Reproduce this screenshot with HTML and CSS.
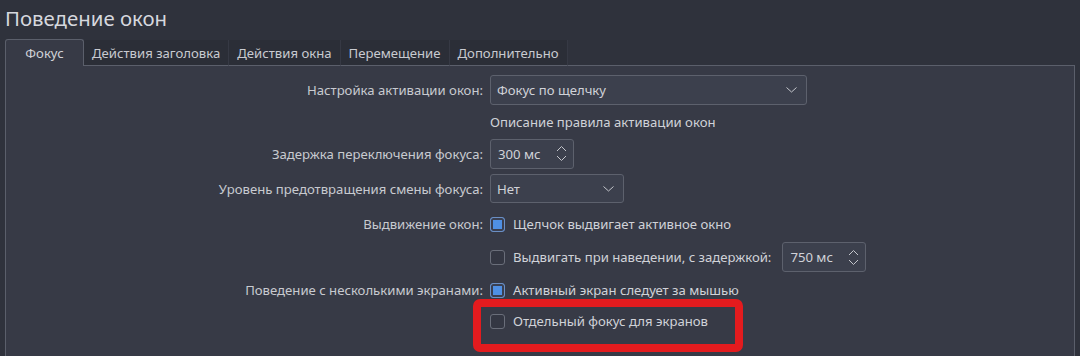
FILE: index.html
```html
<!DOCTYPE html>
<html lang="ru">
<head>
<meta charset="utf-8">
<link rel="stylesheet" href="styles.css">
</head>
<body>
<div class="page">
  <h1 class="title">Поведение окон</h1>
  <div class="tabs">
    <div class="tab active">Фокус</div>
    <div class="tab">Действия заголовка</div>
    <div class="tab">Действия окна</div>
    <div class="tab">Перемещение</div>
    <div class="tab">Дополнительно</div>
    <div class="tab-fill"></div>
  </div>
  <div class="panel">
    <div class="form">
      <div class="label">Настройка активации окон:</div>
      <div class="field"><div class="combo combo-wide"><span>Фокус по щелчку</span><svg class="chev" width="11" height="6" viewBox="0 0 11 6"><path d="M0.5 0.5 L5.5 5 L10.5 0.5" fill="none" stroke="#c4c6cc" stroke-width="1"/></svg></div></div>

      <div class="label"></div>
      <div class="field"><span class="text">Описание правила активации окон</span></div>

      <div class="label">Задержка переключения фокуса:</div>
      <div class="field"><div class="spin"><span>300 мс</span><svg class="arrows" width="11" height="17" viewBox="0 0 11 17"><path d="M1 6 L5.5 1.5 L10 6" fill="none" stroke="#c4c6cc" stroke-width="1"/><path d="M1 11 L5.5 15.5 L10 11" fill="none" stroke="#c4c6cc" stroke-width="1"/></svg></div></div>

      <div class="label">Уровень предотвращения смены фокуса:</div>
      <div class="field"><div class="combo combo-small"><span>Нет</span><svg class="chev" width="11" height="6" viewBox="0 0 11 6"><path d="M0.5 0.5 L5.5 5 L10.5 0.5" fill="none" stroke="#c4c6cc" stroke-width="1"/></svg></div></div>

      <div class="label">Выдвижение окон:</div>
      <div class="field"><span class="check checked"></span><span class="text">Щелчок выдвигает активное окно</span></div>

      <div class="label"></div>
      <div class="field"><span class="check"></span><span class="text">Выдвигать при наведении, с задержкой:</span><div class="spin spin-gap"><span>750 мс</span><svg class="arrows" width="11" height="17" viewBox="0 0 11 17"><path d="M1 6 L5.5 1.5 L10 6" fill="none" stroke="#c4c6cc" stroke-width="1"/><path d="M1 11 L5.5 15.5 L10 11" fill="none" stroke="#c4c6cc" stroke-width="1"/></svg></div></div>

      <div class="label">Поведение с несколькими экранами:</div>
      <div class="field"><span class="check checked"></span><span class="text">Активный экран следует за мышью</span></div>

      <div class="label"></div>
      <div class="field"><span class="check"></span><span class="text">Отдельный фокус для экранов</span></div>
    </div>
  </div>
  <div class="highlight"></div>
</div>
</body>
</html>
```

FILE: styles.css
```css
* { box-sizing: border-box; }
html, body {
  margin: 0;
  padding: 0;
  background: #2f323c;
  height: 356px;
  overflow: hidden;
}
body {
  font-family: "Noto Sans", "Open Sans", sans-serif;
  font-size: 13.15px;
  color: #d0d2d8;
}
.page {
  position: relative;
  padding: 0 5px;
}
.title {
  margin: 0;
  height: 39px;
  padding-top: 5px;
  font-size: 20.4px;
  font-weight: 400;
  line-height: 26px;
  color: #d6d8de;
}
.tabs {
  display: flex;
  height: 27px;
  align-items: stretch;
}
.tab {
  padding: 0 8px;
  display: flex;
  align-items: center;
  margin-top: 1px;
  background: #2b2e37;
  border-right: 1px solid #363944;
  border-bottom: 1px solid #5b5f6b;
  color: #c8cad0;
  white-space: nowrap;
}
.tab.active {
  margin-top: 0;
  width: 79px;
  justify-content: center;
  background: #373a46;
  border: 1px solid #5b5f6b;
  border-bottom: none;
  border-radius: 3px 3px 0 0;
  color: #d0d2d8;
}
.tab-fill {
  flex: 1;
  border-bottom: 1px solid #5b5f6b;
}
.panel {
  background: #373a46;
  border-left: 1px solid #5b5f6b;
  border-right: 1px solid #5b5f6b;
  height: 300px;
  padding-top: 9px;
}
.form {
  display: grid;
  grid-template-columns: 477px auto;
  column-gap: 7px;
  grid-template-rows: 30px 33px 31px 39px 32px 34px 32px 30px;
}
.label {
  display: flex;
  align-items: center;
  justify-content: flex-end;
  color: #c8cad0;
  white-space: nowrap;
}
.field {
  display: flex;
  align-items: center;
  white-space: nowrap;
}
.text { color: #d0d2d8; }
.combo {
  height: 30px;
  display: flex;
  align-items: center;
  justify-content: space-between;
  padding: 0 6px;
  background: #3c404d;
  border: 1px solid #5d616d;
  border-radius: 3px;
}
.combo-wide { width: 317px; }
.combo-small { width: 134px; height: 29px; }
.chev { margin-right: 3px; }
.spin {
  width: 84px;
  height: 30px;
  display: flex;
  align-items: center;
  justify-content: space-between;
  padding: 0 6px 0 7px;
  background: #3c404d;
  border: 1px solid #5d616d;
  border-radius: 3px;
}
.spin-gap { margin-left: 11px; }
.check {
  width: 15px;
  height: 15px;
  margin-right: 8px;
  border: 1px solid #6a6e7a;
  border-radius: 3px;
  background: #343743;
  flex: none;
}
.check.checked {
  border-color: #6b8fc4;
  background: #4f90e4;
  box-shadow: inset 0 0 0 2px #3a3f50;
}
.highlight {
  position: absolute;
  left: 473px;
  top: 299px;
  width: 270px;
  height: 53px;
  border: 8px solid #e31b1e;
  border-radius: 7px;
}
```
